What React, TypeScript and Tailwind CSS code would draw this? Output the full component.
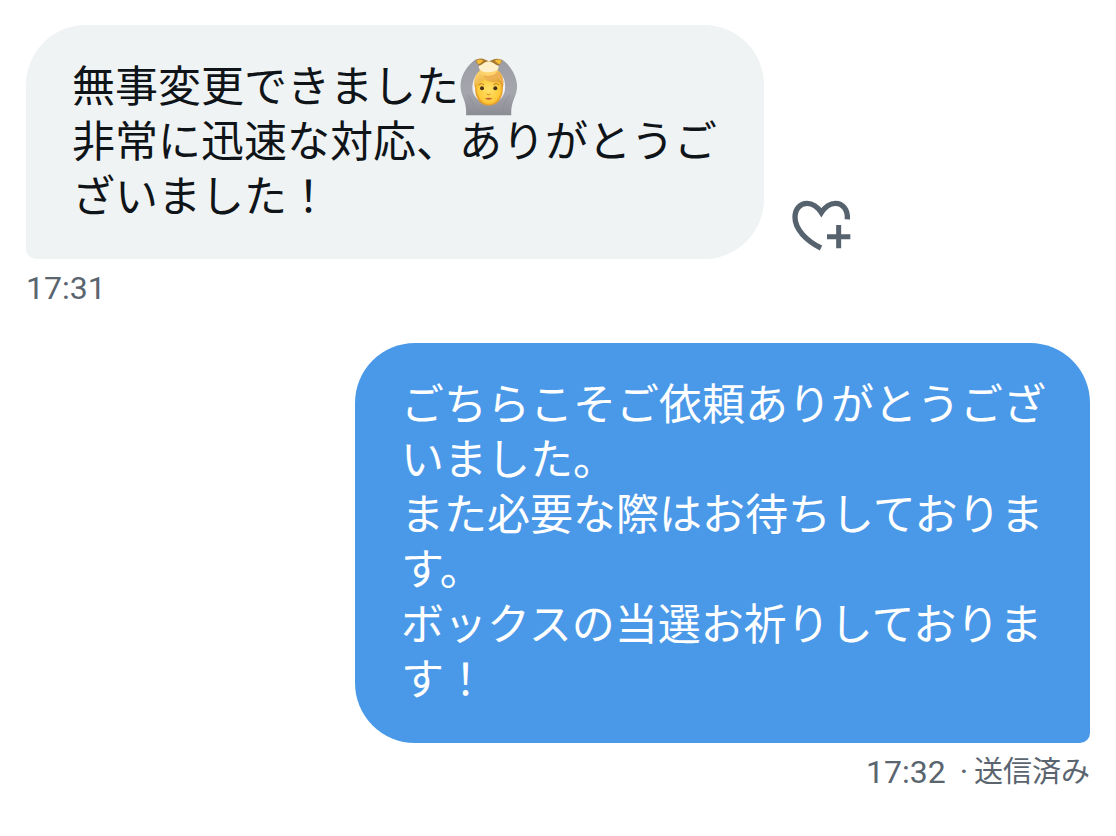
import type { ReactNode } from 'react';
import clsx from 'clsx';

type MessageProps = {
  own?: boolean;
  meta: ReactNode;
  action?: ReactNode;
  children: ReactNode;
};

function OkPersonEmoji() {
  return (
    <svg viewBox="0 6 180 174" className="mt-0.5 -mb-2 inline-block h-[58px] w-[60px] align-top" role="img" aria-label="🙆">
      <defs>
        <linearGradient id="sleeve" x1="0" x2="0" y1="0" y2="1">
          <stop offset="0" stopColor="#9d9da5" />
          <stop offset="0.6" stopColor="#a5a5ac" />
          <stop offset="1" stopColor="#8b8b93" />
        </linearGradient>
        <radialGradient id="face" cx="0.5" cy="0.5" r="0.6">
          <stop offset="0" stopColor="#ffe169" />
          <stop offset="0.7" stopColor="#fecb3a" />
          <stop offset="1" stopColor="#eda526" />
        </radialGradient>
        <linearGradient id="hair" x1="0" x2="1" y1="0" y2="1">
          <stop offset="0" stopColor="#ffdc78" />
          <stop offset="1" stopColor="#dc9422" />
        </linearGradient>
      </defs>
      <path
        d="M52 10C32 21 14 45 7 70C2 90 5 106 12 124C19 140 23 158 21 178H157C155 158 160 140 167 124C174 106 177 90 171 70C164 45 147 21 127 10L112 28H66Z"
        fill="url(#sleeve)"
      />
      <path d="M56 52C42 66 37 92 42 109C47 124 58 134 70 140H110C122 134 133 122 137 106C141 88 137 64 123 51Z" fill="#eef0f2" />
      <path d="M47 75L49 106C51 130 66 149 89 149C113 149 129 130 131 106L133 73Z" fill="#e7a12b" />
      <path d="M51 82C51 66 67 58 90 58C113 58 128 69 128 91C129 122 112 145 90 145C68 145 51 122 51 82Z" fill="url(#face)" />
      <path d="M46 92C43 66 52 47 70 42L111 41C129 47 136 67 132 94C127 86 123 80 118 79C99 81 83 76 77 70C69 81 55 80 46 92Z" fill="url(#hair)" />
      <path d="M76 65C90 74 104 73 115 67C123 69 130 78 131 88C135 66 128 52 113 46L73 48Z" fill="#edb052" />
      <path d="M49 14C56 6 69 6 79 11L90 16L101 11C111 6 124 7 130 14L121 27L90 31L58 27Z" fill="#a8782f" />
      <path d="M52 14C58 9 66 9 73 14L63 23L57 24ZM128 14C122 9 114 9 107 14L117 23L123 24Z" fill="#f2bd3b" />
      <path d="M59 31C70 25 80 16 89 16C98 16 109 26 119 31C119 45 107 52 89 52C72 52 60 45 59 31Z" fill="#fff0c9" />
      <path d="M61 41C74 51 104 52 117 40C115 52 104 59 89 59C74 59 64 53 61 41Z" fill="#ffd36c" />
      <path d="M58 87Q67 79 75 86M103 86Q112 79 120 87" fill="none" stroke="#b87d24" strokeWidth="3" />
      <ellipse cx="69" cy="97" rx="6" ry="6" fill="#46301b" />
      <ellipse cx="109" cy="97" rx="6" ry="6" fill="#46301b" />
      <path d="M83 114Q89 119 95 114" fill="none" stroke="#d28d20" strokeWidth="3" />
      <path d="M78 127Q89 123 100 127Q89 136 78 127Z" fill="#c2603b" />
      <path d="M25 117C38 130 45 144 46 166M153 117C140 130 133 144 132 166" fill="none" stroke="#90909a" strokeWidth="3" />
    </svg>
  );
}

function HeartPlusIcon() {
  return (
    <svg viewBox="0 0 192 180" className="h-[60px] w-16" fill="none" stroke="currentColor" strokeWidth="16" aria-hidden="true">
      <path d="M172 73C174 44 158 25 136 25C118 25 105 36 94 53C83 36 69 25 51 25C30 25 15 42 15 67C15 103 49 137 93 159" />
      <path d="M146 90V160M111 125H181" strokeWidth="15" />
    </svg>
  );
}

function Message({ own = false, meta, action, children }: MessageProps) {
  return (
    <article className={clsx('flex flex-col', own ? 'items-end' : 'items-start')}>
      <div className="flex max-w-full items-end gap-[26px]">
        <div
          className={clsx(
            'pt-[31px] pl-[46px] text-[43px] leading-[55px]',
            own
              ? 'max-w-[735px] rounded-[60px] rounded-br-[10px] bg-[#4a99e9] pr-11 pb-[39px] text-white'
              : 'max-w-[738px] rounded-[60px] rounded-bl-[10px] bg-[#eff3f4] pr-[46px] pb-[38px] text-[#0f1419]',
          )}
        >
          {children}
        </div>
        {action}
      </div>
      <p className="mt-2 flex items-center font-['Roboto','Noto_Sans_CJK_JP',sans-serif] text-[32px] leading-[42px] text-[#5a6570]">
        {meta}
      </p>
    </article>
  );
}

export default function App() {
  return (
    <main
      lang="ja"
      className="flex flex-col gap-[34px] bg-white px-[26px] py-[25px] font-['Noto_Sans_CJK_JP',sans-serif]"
    >
      <Message
        meta={<time>17:31</time>}
        action={
          <button type="button" aria-label="リアクションを追加" className="mb-1 shrink-0 text-[#56626d]">
            <HeartPlusIcon />
          </button>
        }
      >
        <p>
          無事変更できました
          <OkPersonEmoji />
        </p>
        <p>非常に迅速な対応、ありがとうございました！</p>
      </Message>

      <Message
        own
        meta={
          <>
            <time>17:32</time>
            <span className="mr-1.5 ml-3.5">·</span>
            <span className="text-[29px]">送信済み</span>
          </>
        }
      >
        <p>ごちらこそご依頼ありがとうございました。</p>
        <p>また必要な際はお待ちしております。</p>
        <p>ボックスの当選お祈りしております！</p>
      </Message>
    </main>
  );
}
